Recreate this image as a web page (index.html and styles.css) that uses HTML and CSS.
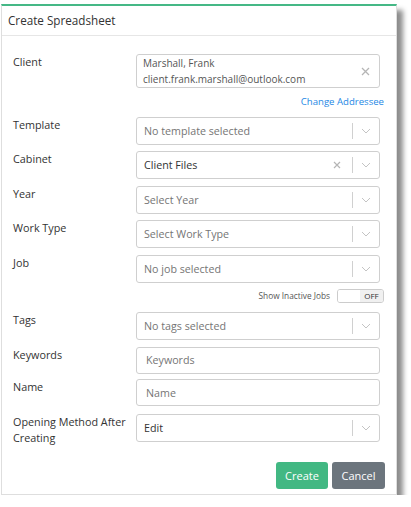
FILE: index.html
```html
<!DOCTYPE html>
<html>
<head>
<meta charset="utf-8">
<link rel="stylesheet" href="styles.css">
</head>
<body>
<div class="page">
  <div class="dialog">
    <div class="dlg-header">Create Spreadsheet</div>
    <div class="dlg-body">
      <div class="row">
        <div class="lbl">Client</div>
        <div class="ctl">
          <div class="box client-box">
            <div class="client-text">
              <div>Marshall, Frank</div>
              <div>client.frank.marshall@outlook.com</div>
            </div>
            <span class="client-clear"><svg width="9" height="9" viewBox="0 0 9 9"><path d="M1 1L8 8M8 1L1 8" stroke="#b5b5b5" stroke-width="1.3" fill="none"/></svg></span>
          </div>
          <div class="side-row link-row"><span class="link">Change Addressee</span></div>
        </div>
      </div>

      <div class="row">
        <div class="lbl">Template</div>
        <div class="ctl">
          <div class="box select">
            <span class="val placeholder">No template selected</span>
            <span class="sep"></span>
            <span class="chev"><svg width="10" height="6" viewBox="0 0 10 6"><path d="M1 1L5 5L9 1" stroke="#c4c4c4" stroke-width="1" fill="none"/></svg></span>
          </div>
        </div>
      </div>

      <div class="row">
        <div class="lbl">Cabinet</div>
        <div class="ctl">
          <div class="box select">
            <span class="val">Client Files</span>
            <span class="clear"><svg width="8" height="8" viewBox="0 0 8 8"><path d="M1 1L7 7M7 1L1 7" stroke="#b5b5b5" stroke-width="1.2" fill="none"/></svg></span>
            <span class="sep"></span>
            <span class="chev"><svg width="10" height="6" viewBox="0 0 10 6"><path d="M1 1L5 5L9 1" stroke="#c4c4c4" stroke-width="1" fill="none"/></svg></span>
          </div>
        </div>
      </div>

      <div class="row">
        <div class="lbl">Year</div>
        <div class="ctl">
          <div class="box select">
            <span class="val placeholder">Select Year</span>
            <span class="sep"></span>
            <span class="chev"><svg width="10" height="6" viewBox="0 0 10 6"><path d="M1 1L5 5L9 1" stroke="#c4c4c4" stroke-width="1" fill="none"/></svg></span>
          </div>
        </div>
      </div>

      <div class="row">
        <div class="lbl">Work Type</div>
        <div class="ctl">
          <div class="box select">
            <span class="val placeholder">Select Work Type</span>
            <span class="sep"></span>
            <span class="chev"><svg width="10" height="6" viewBox="0 0 10 6"><path d="M1 1L5 5L9 1" stroke="#c4c4c4" stroke-width="1" fill="none"/></svg></span>
          </div>
        </div>
      </div>

      <div class="row row-job">
        <div class="lbl">Job</div>
        <div class="ctl">
          <div class="box select">
            <span class="val placeholder">No job selected</span>
            <span class="sep"></span>
            <span class="chev"><svg width="10" height="6" viewBox="0 0 10 6"><path d="M1 1L5 5L9 1" stroke="#c4c4c4" stroke-width="1" fill="none"/></svg></span>
          </div>
          <div class="side-row toggle-row">
            <span class="toggle-label">Show Inactive Jobs</span>
            <span class="toggle"><span class="toggle-knob"></span><span class="toggle-off">OFF</span></span>
          </div>
        </div>
      </div>

      <div class="row">
        <div class="lbl">Tags</div>
        <div class="ctl">
          <div class="box select">
            <span class="val placeholder">No tags selected</span>
            <span class="sep"></span>
            <span class="chev"><svg width="10" height="6" viewBox="0 0 10 6"><path d="M1 1L5 5L9 1" stroke="#c4c4c4" stroke-width="1" fill="none"/></svg></span>
          </div>
        </div>
      </div>

      <div class="row row-keywords">
        <div class="lbl">Keywords</div>
        <div class="ctl">
          <div class="box input"><span class="placeholder">Keywords</span></div>
        </div>
      </div>

      <div class="row row-name">
        <div class="lbl">Name</div>
        <div class="ctl">
          <div class="box input"><span class="placeholder">Name</span></div>
        </div>
      </div>

      <div class="row row-last">
        <div class="lbl">Opening Method After Creating</div>
        <div class="ctl">
          <div class="box select">
            <span class="val">Edit</span>
            <span class="sep"></span>
            <span class="chev"><svg width="10" height="6" viewBox="0 0 10 6"><path d="M1 1L5 5L9 1" stroke="#c4c4c4" stroke-width="1" fill="none"/></svg></span>
          </div>
        </div>
      </div>
    </div>
    <div class="dlg-footer">
      <span class="btn btn-create">Create</span>
      <span class="btn btn-cancel">Cancel</span>
    </div>
  </div>
</div>
</body>
</html>
```

FILE: styles.css
```css
html, body {
  margin: 0;
  padding: 0;
  background: #ffffff;
}
body {
  font-family: "Open Sans", "Noto Sans", sans-serif;
  font-size: 10.7px;
  color: #333333;
}
.page {
  padding: 4px 0 0 1px;
}
.dialog {
  width: 396px;
  box-sizing: border-box;
  background: #ffffff;
  border: 1px solid #dedede;
  border-top: 2px solid #45b886;
  box-shadow: 6px 6px 5px rgba(0, 0, 0, 0.45);
}
.dlg-header {
  height: 29px;
  line-height: 29px;
  padding-left: 6px;
  font-size: 11.7px;
  color: #333;
  border-bottom: 1px solid #e6e6e6;
}
.dlg-body {
  padding: 18px 16px 0 11px;
}
.row {
  display: grid;
  grid-template-columns: 123px 244px;
  margin-bottom: 6.5px;
}
.lbl {
  line-height: 16px;
  font-size: 10.8px;
  color: #333;
  padding-right: 2px;
}
.ctl {
  display: flex;
  flex-direction: column;
}
.box {
  box-sizing: border-box;
  border: 1px solid #cfcfcf;
  border-radius: 3px;
  background: #fff;
  display: flex;
  align-items: center;
}
.select {
  height: 28px;
}
.input {
  height: 27px;
  padding-left: 9px;
}
.val {
  flex: 1;
  padding-left: 7px;
  color: #333;
}
.placeholder {
  color: #757575;
}
.sep {
  width: 1px;
  height: 16px;
  background: #d0d0d0;
}
.chev {
  width: 26px;
  display: flex;
  justify-content: center;
  align-items: center;
}
.clear {
  display: flex;
  align-items: center;
  margin-right: 11px;
}
.client-box {
  height: 34px;
  padding-left: 6px;
}
.client-text {
  flex: 1;
  line-height: 16px;
  font-size: 10px;
  color: #555;
}
.client-clear {
  display: flex;
  width: 27px;
  justify-content: center;
}
.side-row {
  display: flex;
  justify-content: flex-end;
  align-items: center;
  margin-right: -4px;
}
.link-row {
  margin-top: 6px;
  line-height: 16px;
}
.link {
  color: #1e88e5;
  font-size: 9.6px;
}
.toggle-row {
  margin-top: 6px;
  margin-bottom: 3px;
}
.toggle-label {
  font-size: 8.3px;
  color: #555;
  margin-right: 7px;
}
.toggle {
  box-sizing: border-box;
  width: 47px;
  height: 14px;
  border: 1px solid #cccccc;
  border-radius: 3px;
  display: flex;
  overflow: hidden;
}
.toggle-knob {
  flex: 1;
  background: #fff;
}
.toggle-off {
  width: 23px;
  background: #f0f0f0;
  font-size: 8px;
  line-height: 12px;
  text-align: center;
  color: #333;
}
.row-keywords {
  margin-bottom: 5.5px;
}
.row-name {
  margin-bottom: 7.5px;
}
.row-last {
  margin-bottom: 0;
}
.dlg-footer {
  display: flex;
  justify-content: flex-end;
  gap: 4px;
  padding: 16px 11px 5px 0;
}
.btn {
  box-sizing: border-box;
  height: 27px;
  line-height: 27px;
  border-radius: 3px;
  color: #fff;
  font-size: 11px;
  text-align: center;
}
.btn-create {
  width: 52px;
  background: #42b883;
}
.btn-cancel {
  width: 53px;
  background: #6c757d;
}
```
